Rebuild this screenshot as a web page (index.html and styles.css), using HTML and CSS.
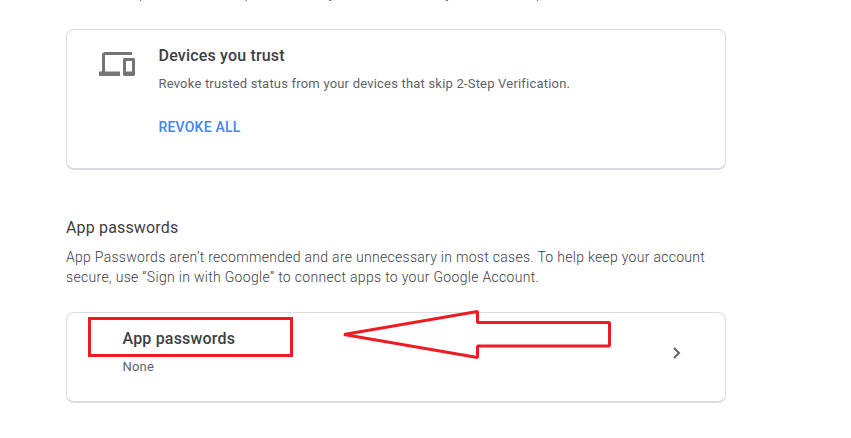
FILE: index.html
```
<!DOCTYPE html>
<html lang="en">
<head>
<meta charset="utf-8">
<title>2-Step Verification</title>
<link rel="stylesheet" href="styles.css">
</head>
<body>
<main class="page">
  <div class="intro"><p>You can skip the second step on devices you trust, such as your own computer.</p></div>
  <section class="card devices">
    <svg class="devices-icon" viewBox="0 0 24 24" aria-hidden="true"><path d="M4 6h18V4H4c-1.1 0-2 .9-2 2v11H0v3h14v-3H4V6zm19 2h-6c-.55 0-1 .45-1 1v10c0 .55.45 1 1 1h6c.55 0 1-.45 1-1V9c0-.55-.45-1-1-1zm-1 9h-4v-7h4v7z"/></svg>
    <div>
      <h3 class="card-title">Devices you trust</h3>
      <p class="card-text">Revoke trusted status from your devices that skip 2-Step Verification.</p>
      <a class="action">REVOKE ALL</a>
    </div>
  </section>
  <h2 class="section-title">App passwords</h2>
  <p class="section-text"><span class="line">App Passwords aren’t recommended and are unnecessary in most cases. To help keep your account</span><span class="line second">secure, use “Sign in with Google” to connect apps to your Google Account.</span></p>
  <section class="card passwords">
    <div>
      <h3 class="card-title">App passwords</h3>
      <p class="card-text">None</p>
    </div>
    <svg class="chevron" viewBox="0 0 8 12" aria-hidden="true"><path d="M1 1l5 5-5 5"/></svg>
    <div class="highlight"></div>
    <svg class="arrow" viewBox="0 0 270 52" aria-hidden="true"><path d="M3 26.500L136.500 3.500V14.500H268.500V38H136.500V49.500Z"/></svg>
  </section>
</main>
</body>
</html>
```
FILE: styles.css
```
* { box-sizing: border-box; }
body { margin: 0; background: #fff; font-family: Roboto, sans-serif; color: #3c4043; height: 438px; overflow: hidden; }
h2, h3, p { margin: 0; }
.page { width: 660px; margin-left: 66px; }
.intro { height: 29px; overflow: hidden; }
.intro p { margin-top: -17px; font-size: 14px; font-weight: 300; line-height: 20px; letter-spacing: .29px; color: #3c4043; white-space: nowrap; }
.card { position: relative; display: flex; border: 1px solid #dadce0; border-bottom-width: 2px; border-radius: 8px; }
.devices { height: 141px; padding: 16px 32px; }
.devices-icon { width: 36px; height: 36px; margin-right: 23.5px; fill: #757575; flex: none; }
.card-title { margin-top: -2px; font-size: 16px; font-weight: 500; line-height: 24px; letter-spacing: .18px; }
.card-text { margin-top: 6px; font-size: 13px; line-height: 20px; letter-spacing: .2px; color: #5f6368; white-space: nowrap; }
.action { display: block; margin-top: 23px; font-size: 14px; line-height: 20px; font-weight: 500; letter-spacing: .2px; color: #4285f4; }
.section-title { margin-top: 46px; font-size: 16px; font-weight: 400; line-height: 24px; letter-spacing: .16px; }
.section-text { margin-top: 7px; font-size: 14px; font-weight: 300; line-height: 20px; letter-spacing: .29px; color: #3c4043; white-space: nowrap; }
.line { display: block; }
.second { letter-spacing: .31px; }
.passwords { height: 91px; margin-top: 25px; padding: 16px 44px 0 55.5px; justify-content: space-between; }
.chevron { width: 8px; height: 12px; margin-top: 18px; fill: none; stroke: #5f6368; stroke-width: 2; }
.highlight { position: absolute; left: 21px; top: 4px; width: 205px; height: 40px; border: 3px solid #ed1c24; }
.arrow { position: absolute; left: 274px; top: -5px; width: 270px; height: 52px; fill: none; stroke: #ed1c24; stroke-width: 3; stroke-linejoin: bevel; }
```
